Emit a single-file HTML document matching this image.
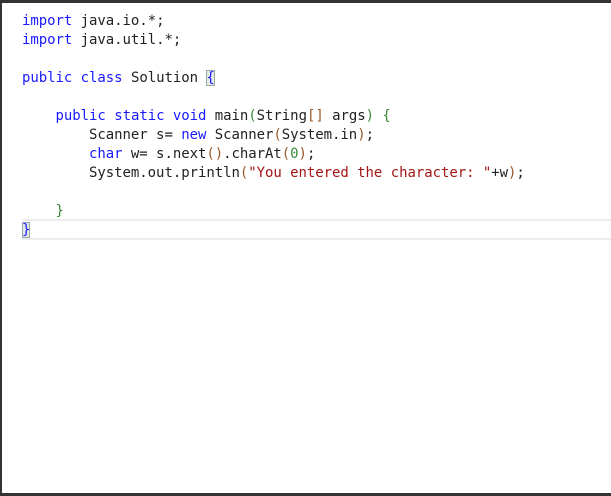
<!DOCTYPE html>
<html><head><style>
html,body{margin:0;padding:0;background:#fff;}
.frame{position:absolute;left:0;top:0;width:611px;height:496px;box-sizing:border-box;border-top:3px solid #333;border-left:2px solid #333;border-bottom:3px solid #333;}
.cur{position:absolute;left:22px;right:0;top:219px;height:17px;border-top:2px solid #ececec;border-bottom:2px solid #ececec;}
pre{position:absolute;left:22px;top:12px;margin:0;font-family:"DejaVu Sans Mono","Liberation Mono",monospace;font-size:14px;line-height:19px;color:#222;letter-spacing:-0.05px;}
.k{color:#1a1aff}.p{color:#9a5a2a}.g{color:#3a8a3a}.s{color:#a31515}
.b{background:#e8eae8;outline:1px solid #9aa;outline-offset:-1px}
.bb{background:#e4e6ea;outline:1px solid #9aa;outline-offset:-1px;color:#1a1aff}
</style></head><body>
<div class="frame"></div>
<div class="cur"></div>
<pre><span class="k">import</span> java.io.*;
<span class="k">import</span> java.util.*;

<span class="k">public</span> <span class="k">class</span> Solution <span class="b k">{</span>

    <span class="k">public</span> <span class="k">static</span> <span class="k">void</span> main<span class="g">(</span>String<span class="p">[]</span> args<span class="g">)</span> <span class="g">{</span>
        Scanner s= <span class="k">new</span> Scanner<span class="p">(</span>System.in<span class="p">)</span>;
        <span class="k">char</span> w= s.next<span class="p">()</span>.charAt<span class="p">(</span><span class="g">0</span><span class="p">)</span>;
        System.out.println<span class="p">(</span><span class="s">"You entered the character: "</span>+w<span class="p">)</span>;

    <span class="g">}</span>
<span class="bb">}</span></pre>
</body></html>
